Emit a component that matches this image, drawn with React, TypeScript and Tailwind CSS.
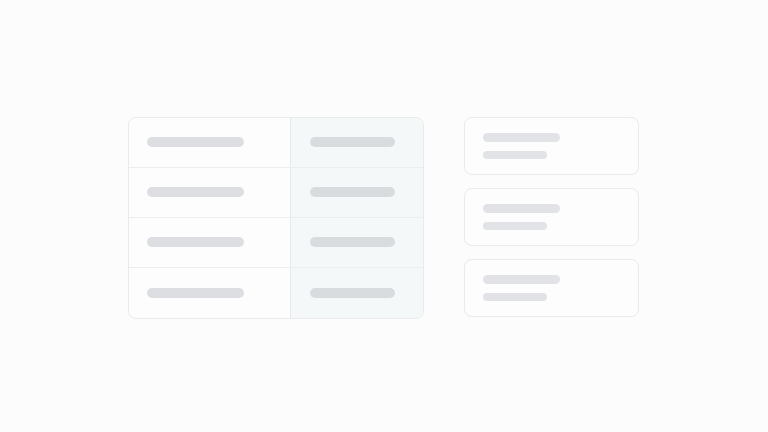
const rows = [0, 1, 2, 3];
const cards = [0, 1, 2];

export default function App() {
  return (
    <div className="w-[768px] h-[432px] bg-[#fcfcfc] flex items-center justify-center" style={{ fontFamily: "Inter, sans-serif" }}>
      <div className="flex items-start gap-[40px] mt-[3px] mr-[1px]">
        <div className="w-[296px] rounded-lg border border-[#e8eaec] overflow-hidden bg-[#fdfdfd]">
          {rows.map(i => (
            <div key={i} className={`flex h-[50px] ${i < 3 ? "border-b border-[#ebedee]" : ""}`}>
              <div className="w-[162px] flex items-center pl-[18px] border-r border-[#e6e9ea]">
                <div className="w-[97px] h-[10px] rounded-full bg-[#dcdee1]" />
              </div>
              <div className="flex-1 flex items-center pl-[19px] bg-[#f4f8f9]">
                <div className="w-[85px] h-[10px] rounded-full bg-[#d9dcdf]" />
              </div>
            </div>
          ))}
        </div>
        <div className="flex flex-col gap-[13px]">
          {cards.map(i => (
            <div key={i} className="w-[175px] h-[58px] rounded-lg border border-[#e8eaec] bg-[#fdfdfd] flex flex-col justify-center gap-[9px] pl-[18px]">
              <div className="w-[77px] h-[9px] rounded-full bg-[#e1e3e6]" />
              <div className="w-[64px] h-[8px] rounded-full bg-[#e1e3e6]" />
            </div>
          ))}
        </div>
      </div>
    </div>
  );
}
